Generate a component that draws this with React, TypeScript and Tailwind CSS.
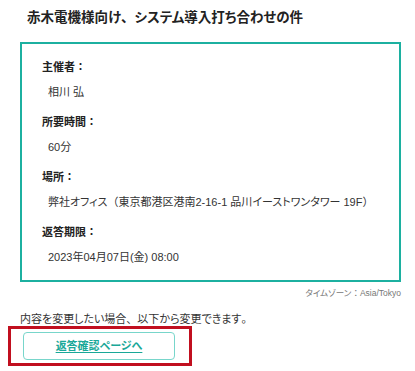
const FONT = "font-['Liberation_Sans','Noto_Sans_CJK_JP',sans-serif] [font-feature-settings:'palt']";

const ITEMS = [
  { label: "主催者：", value: "相川 弘" },
  { label: "所要時間：", value: "60分" },
  { label: "場所：", value: "弊社オフィス（東京都港区港南2-16-1 品川イーストワンタワー 19F）" },
  { label: "返答期限：", value: "2023年04月07日(金) 08:00" },
];

// keep full-width punctuation at full width while kana stay proportional
function Jp({ text }: { text: string }) {
  return (
    <>
      {text.split(/([、。：（）])/).map((part, i) =>
        /^[、。：（）]$/.test(part) ? (
          <span key={i} className="[font-feature-settings:normal]">
            {part}
          </span>
        ) : (
          part
        )
      )}
    </>
  );
}

export default function App() {
  return (
    <div className={`min-h-screen bg-white pt-2 pl-5 pr-[14px] text-[#333] ${FONT}`}>
      <h1 className="pl-[7px] text-[13.5px] font-bold leading-[20px] text-[#222]">
        <Jp text="赤木電機様向け、システム導入打ち合わせの件" />
      </h1>

      {/* Event details */}
      <div className="mt-[14px] border-2 border-[#1cb0a0] px-5 pt-[15px] pb-[15px]">
        {ITEMS.map((item, i) => (
          <div key={item.label} className={i > 0 ? "mt-[14px]" : ""}>
            <p className="text-[11px] font-bold leading-4 text-[#222]">
              <Jp text={item.label} />
            </p>
            <p className="mt-[9px] whitespace-nowrap pl-[6px] text-[11px] leading-4 text-[#333]">
              <Jp text={item.value} />
            </p>
          </div>
        ))}
      </div>
      <p className="mt-[5px] text-right text-[8.5px] leading-3 text-[#777]">
        <Jp text="タイムゾーン：Asia/Tokyo" />
      </p>

      <p className="mt-[13px] text-[11px] leading-[14px] text-[#333]">
        <Jp text="内容を変更したい場合、以下から変更できます。" />
      </p>
      <div className="-ml-3 inline-block border-[3px] border-[#c10f1f] py-[3px] pl-3 pr-[14px]">
        <a
          href="#"
          className="flex h-7 w-[152px] items-center justify-center rounded-[4px] border-[1.5px] border-[#78d6cb] text-[11px] font-bold text-[#1aa898] underline underline-offset-2"
        >
          返答確認ページへ
        </a>
      </div>
    </div>
  );
}
